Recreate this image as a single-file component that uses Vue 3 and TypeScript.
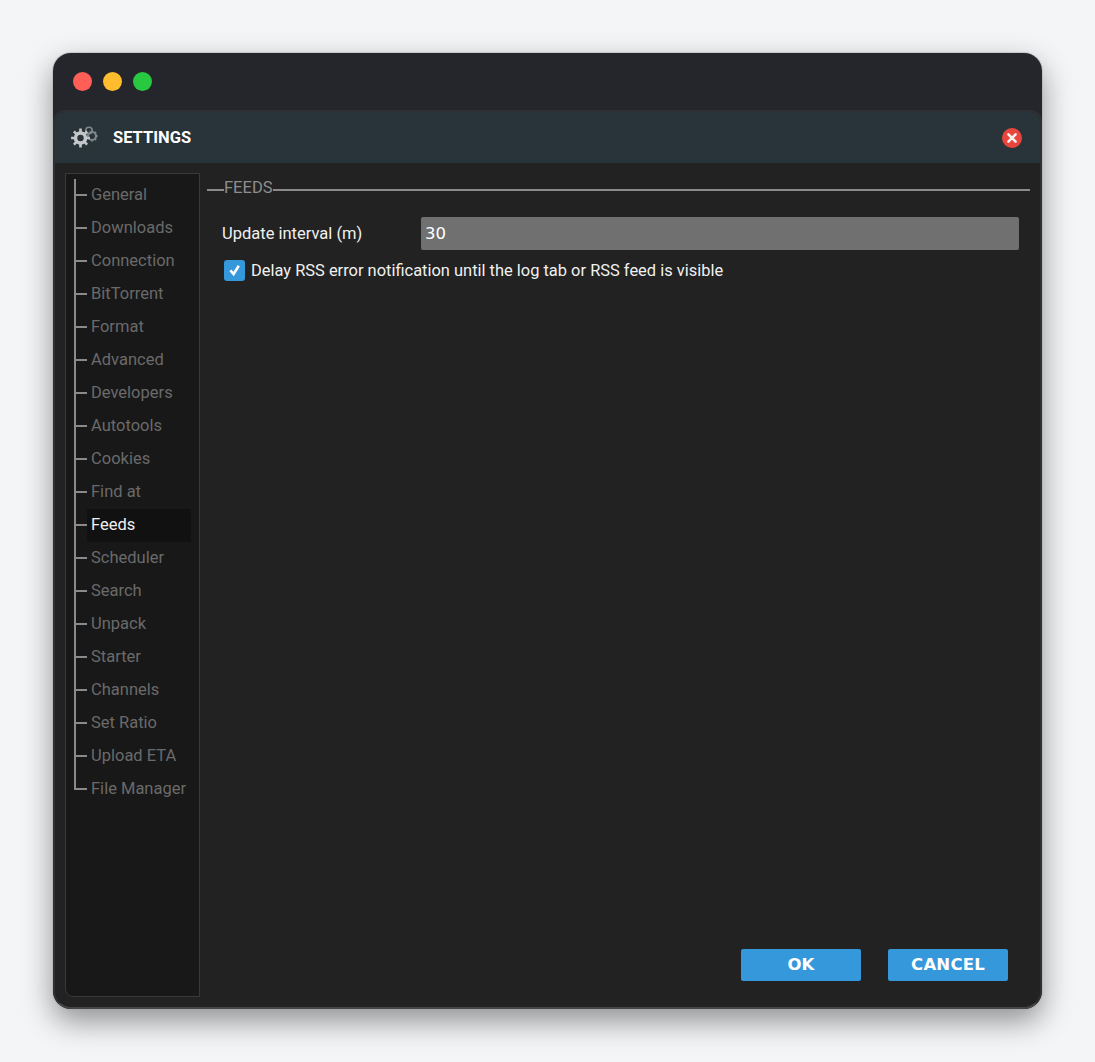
<script setup lang="ts">
const items: string[] = ['General','Downloads','Connection','BitTorrent','Format','Advanced','Developers','Autotools','Cookies','Find at','Feeds','Scheduler','Search','Unpack','Starter','Channels','Set Ratio','Upload ETA','File Manager']
const active = 'Feeds'
</script>

<template>
  <div class="page">
    <div class="window">
      <div class="traffic">
        <span class="dot red"></span>
        <span class="dot yellow"></span>
        <span class="dot green"></span>
      </div>
      <div class="dialog">
        <header class="head">
          <svg class="gears" width="30" height="26" viewBox="0 0 30 26">
            <g fill="none" stroke="#7f878b">
              <circle cx="19" cy="5.5" r="3.2" stroke-width="1.6"/>
              <circle cx="22" cy="11" r="4" stroke-width="2.2"/>
              <path d="M22 5.2v1.6M22 15.2v1.6M27.8 11h-1.6M26.1 6.9l-1.1 1.1M26.1 15.1L25 14" stroke-width="1.6"/>
            </g>
            <g fill="none" stroke="#c4c8ca">
              <circle cx="10.5" cy="13" r="5" stroke-width="3.6"/>
              <path d="M10.5 3.6V7M10.5 19v3.4M1.1 13h3.4M16.5 13h3.4M3.9 6.4l2.4 2.4M14.7 17.2l2.4 2.4M3.9 19.6l2.4-2.4M14.7 8.8l2.4-2.4" stroke-width="2.6"/>
            </g>
          </svg>
          <span class="title">SETTINGS</span>
          <svg class="close" width="20" height="20" viewBox="0 0 20 20">
            <circle cx="10" cy="10" r="10" fill="#e8463c"/>
            <path d="M6.4 6.4l7.2 7.2M13.6 6.4l-7.2 7.2" stroke="#f6efee" stroke-width="2.6" stroke-linecap="round"/>
          </svg>
        </header>
        <div class="body">
          <nav class="side">
            <ul class="tree">
              <li v-for="item in items" :key="item" class="node" :class="{ on: item === active }">
                <span class="label">{{ item }}</span>
              </li>
            </ul>
          </nav>
          <main class="content">
            <div class="legend"><span class="lead"></span><span class="legend-text">FEEDS</span><span class="rule"></span></div>
            <div class="form">
              <div class="row">
                <label class="field-label">Update interval (m)</label>
                <input class="input" value="30" />
              </div>
              <label class="check">
                <span class="box">
                  <svg width="14" height="14" viewBox="0 0 14 14"><path d="M2.4 7.4l3.2 3.6 5.2-8.2" fill="none" stroke="#fff" stroke-width="2.6"/></svg>
                </span>
                <span>Delay RSS error notification until the log tab or RSS feed is visible</span>
              </label>
            </div>
            <div class="actions">
              <button class="btn">OK</button>
              <button class="btn">CANCEL</button>
            </div>
          </main>
        </div>
      </div>
    </div>
  </div>
</template>

<style>
html, body { background: #f4f5f7; }
</style>

<style scoped>
.page {
  box-sizing: border-box;
  width: 1095px;
  height: 1062px;
  padding: 53px;
  background: #f4f5f7;
  font-family: Roboto, sans-serif;
}
.window {
  box-sizing: border-box;
  height: 956px;
  border-radius: 18px;
  background: #24262b;
  box-shadow: 0 0 0 1px rgba(170,170,170,.45), 0 12px 30px rgba(0,0,0,.42);
  display: flex;
  flex-direction: column;
  overflow: hidden;
}
.traffic {
  height: 57px;
  flex: none;
  display: flex;
  align-items: center;
  gap: 11px;
  padding-left: 20px;
  box-sizing: border-box;
}
.dot { width: 19px; height: 19px; border-radius: 50%; }
.red { background: #ff5f57; }
.yellow { background: #febc2e; }
.green { background: #28c840; }
.dialog {
  flex: 1;
  min-height: 0;
  box-sizing: border-box;
  border: 2px solid #2f3033;
  border-bottom-color: #454545;
  border-radius: 12px 12px 18px 18px;
  background: #222222;
  display: flex;
  flex-direction: column;
  overflow: hidden;
}
.head {
  height: 51px;
  flex: none;
  background: #28333a;
  display: flex;
  align-items: center;
  padding: 0 18px 0 15px;
}
.gears { margin-right: 13px; }
.title { color: #fff; font-weight: 700; font-size: 16.5px; flex: 1; }
.body { flex: 1; min-height: 0; display: flex; padding: 10px; }
.side {
  box-sizing: border-box;
  width: 135px;
  flex: none;
  background: #181818;
  border: 1px solid #3a3a3a;
  border-radius: 0 0 0 8px;
  padding: 5px 8px 0 8px;
}
.tree { list-style: none; margin: 0; padding: 0; }
.node {
  position: relative;
  height: 33px;
  padding-left: 13px;
  box-sizing: border-box;
}
.node::before {
  content: '';
  position: absolute;
  left: 0;
  top: 0;
  bottom: 0;
  width: 2px;
  background: #8a8a8a;
}
.node:last-child::before { bottom: 16px; }
.node::after {
  content: '';
  position: absolute;
  left: 0;
  top: 15px;
  width: 13px;
  height: 2px;
  background: #8a8a8a;
}
.label {
  display: block;
  height: 33px;
  line-height: 31px;
  padding-left: 4px;
  color: #6a6a6a;
  font-size: 16.5px;
  white-space: nowrap;
}
.on .label { background: #111111; color: #f0f0f0; }
.content { flex: 1; min-width: 0; display: flex; flex-direction: column; padding-left: 7px; }
.legend { display: flex; align-items: center; height: 30px; color: #8e8e8e; font-size: 16.5px; }
.lead { width: 17px; height: 2px; background: #8a8a8a; margin-top: 3px; flex: none; }
.rule { flex: 1; height: 2px; background: #8a8a8a; margin-top: 3px; }
.legend-text { line-height: 30px; }
.form { padding: 14px 11px 0 15px; }
.row { display: flex; align-items: center; height: 33px; }
.field-label { width: 199px; flex: none; color: #f0f0f0; font-size: 16.5px; }
.input {
  flex: 1;
  min-width: 0;
  height: 33px;
  box-sizing: border-box;
  border: 0;
  border-radius: 2px;
  background: #707070;
  color: #fff;
  font-family: 'DejaVu Sans', sans-serif;
  font-size: 16.5px;
  padding: 0 4px;
  outline: none;
}
.check { display: flex; align-items: center; gap: 6px; height: 24px; margin-top: 8px; padding-left: 2px; color: #f0f0f0; font-size: 16.45px; }
.box {
  width: 21px;
  height: 21px;
  flex: none;
  border-radius: 3px;
  background: #3498db;
  display: flex;
  align-items: center;
  justify-content: center;
}
.actions { margin-top: auto; display: flex; justify-content: flex-end; gap: 27px; padding: 0 22px 16px 0; }
.btn {
  width: 120px;
  height: 32px;
  border: 0;
  border-radius: 2px;
  padding: 0 0 2px;
  background: #3498db;
  color: #fff;
  font-family: 'DejaVu Sans', sans-serif;
  font-weight: 700;
  font-size: 16.5px;
  letter-spacing: .2px;
}
</style>
